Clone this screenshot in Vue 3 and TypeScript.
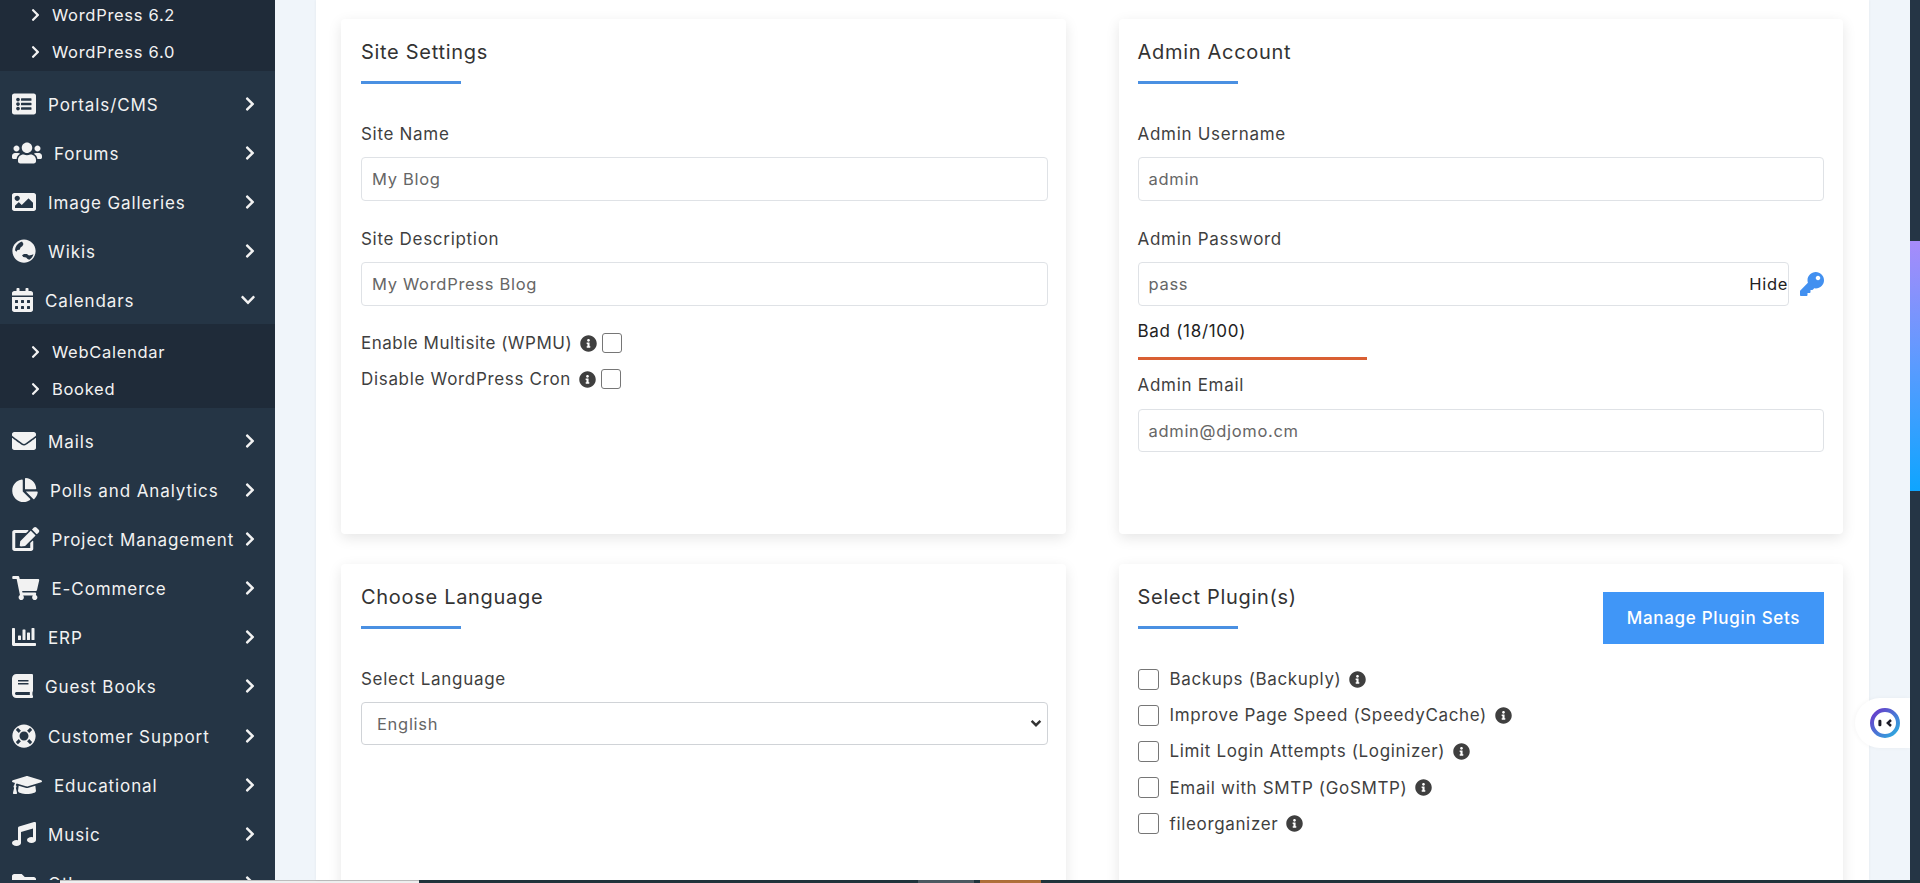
<script setup lang="ts">
interface Icon { box: string; d: string; w: number }
interface Item { label: string; icon: Icon; open?: boolean; subs?: string[] }

const I = {
  list: { box: '0 0 512 512', w: 24, d: 'M464 480H48c-26.51 0-48-21.49-48-48V80c0-26.51 21.49-48 48-48h416c26.51 0 48 21.49 48 48v352c0 26.51-21.49 48-48 48zM128 120c-22.091 0-40 17.909-40 40s17.909 40 40 40 40-17.909 40-40-17.909-40-40-40zm0 96c-22.091 0-40 17.909-40 40s17.909 40 40 40 40-17.909 40-40-17.909-40-40-40zm0 96c-22.091 0-40 17.909-40 40s17.909 40 40 40 40-17.909 40-40-17.909-40-40-40zm288-136v-32c0-6.627-5.373-12-12-12H204c-6.627 0-12 5.373-12 12v32c0 6.627 5.373 12 12 12h200c6.627 0 12-5.373 12-12zm0 96v-32c0-6.627-5.373-12-12-12H204c-6.627 0-12 5.373-12 12v32c0 6.627 5.373 12 12 12h200c6.627 0 12-5.373 12-12zm0 96v-32c0-6.627-5.373-12-12-12H204c-6.627 0-12 5.373-12 12v32c0 6.627 5.373 12 12 12h200c6.627 0 12-5.373 12-12z' },
  users: { box: '0 0 640 512', w: 30, d: 'M96 224c35.3 0 64-28.7 64-64s-28.7-64-64-64-64 28.7-64 64 28.7 64 64 64zm448 0c35.3 0 64-28.7 64-64s-28.7-64-64-64-64 28.7-64 64 28.7 64 64 64zm32 32h-64c-17.6 0-33.5 7.1-45.1 18.6 40.3 22.1 68.9 62 75.1 109.4h66c17.7 0 32-14.3 32-32v-32c0-35.3-28.7-64-64-64zm-256 0c61.9 0 112-50.1 112-112S381.9 32 320 32 208 82.1 208 144s50.1 112 112 112zm76.8 32h-8.3c-20.8 10-43.9 16-68.5 16s-47.6-6-68.5-16h-8.3C179.6 288 128 339.6 128 403.2V432c0 26.5 21.5 48 48 48h288c26.5 0 48-21.5 48-48v-28.8c0-63.6-51.6-115.2-115.2-115.2zm-223.7-13.4C161.5 263.1 145.6 256 128 256H64c-35.3 0-64 28.7-64 64v32c0 17.7 14.3 32 32 32h65.9c6.3-47.4 34.9-87.3 75.2-109.4z' },
  image: { box: '0 0 512 512', w: 24, d: 'M464 448H48c-26.51 0-48-21.49-48-48V112c0-26.51 21.49-48 48-48h416c26.51 0 48 21.49 48 48v288c0 26.51-21.49 48-48 48zM112 120c-30.928 0-56 25.072-56 56s25.072 56 56 56 56-25.072 56-56-25.072-56-56-56zM64 384h384V272l-87.515-87.515c-4.686-4.686-12.284-4.686-16.971 0L208 320l-55.515-55.515c-4.686-4.686-12.284-4.686-16.971 0L64 336v48z' },
  globe: { box: '0 0 496 512', w: 24, d: 'M248 8C111 8 0 119 0 256s111 248 248 248 248-111 248-248S385 8 248 8zm-12 96l-20 46-42 30-20 50-44 6-24 38-30-34c4-74 48-138 110-170 l40-16zm214 220c-14 50-46 90-90 116l-36-14-30-30-62-14-26-36 42-26 62 2 44 28 50-10 46-16z' },
  calendar: { box: '0 0 448 512', w: 21, d: 'M0 464c0 26.5 21.5 48 48 48h352c26.5 0 48-21.5 48-48V192H0v272zm320-196c0-6.6 5.4-12 12-12h40c6.6 0 12 5.4 12 12v40c0 6.6-5.4 12-12 12h-40c-6.6 0-12-5.4-12-12v-40zm0 128c0-6.6 5.4-12 12-12h40c6.6 0 12 5.4 12 12v40c0 6.6-5.4 12-12 12h-40c-6.6 0-12-5.4-12-12v-40zM192 268c0-6.6 5.4-12 12-12h40c6.6 0 12 5.4 12 12v40c0 6.6-5.4 12-12 12h-40c-6.6 0-12-5.4-12-12v-40zm0 128c0-6.6 5.4-12 12-12h40c6.6 0 12 5.4 12 12v40c0 6.6-5.4 12-12 12h-40c-6.6 0-12-5.4-12-12v-40zM64 268c0-6.6 5.4-12 12-12h40c6.6 0 12 5.4 12 12v40c0 6.6-5.4 12-12 12H76c-6.6 0-12-5.4-12-12v-40zm0 128c0-6.6 5.4-12 12-12h40c6.6 0 12 5.4 12 12v40c0 6.6-5.4 12-12 12H76c-6.6 0-12-5.4-12-12v-40zM400 64h-48V16c0-8.8-7.2-16-16-16h-32c-8.8 0-16 7.2-16 16v48H160V16c0-8.8-7.2-16-16-16h-32c-8.8 0-16 7.2-16 16v48H48C21.5 64 0 85.5 0 112v48h448v-48c0-26.5-21.5-48-48-48z' },
  mail: { box: '0 0 512 512', w: 24, d: 'M502.3 190.8c3.9-3.1 9.7-.2 9.7 4.7V400c0 26.5-21.5 48-48 48H48c-26.5 0-48-21.5-48-48V195.6c0-5 5.7-7.8 9.7-4.7 22.4 17.4 52.1 39.5 154.1 113.6 21.1 15.4 56.7 47.8 92.2 47.6 35.7.3 72-32.8 92.3-47.6 102-74.1 131.6-96.3 154-113.7zM256 320c23.2.4 56.6-29.2 73.4-41.4 132.7-96.3 142.8-104.7 173.4-128.7 5.8-4.5 9.2-11.5 9.2-18.9v-19c0-26.5-21.5-48-48-48H48C21.5 64 0 85.5 0 112v19c0 7.4 3.4 14.3 9.2 18.9 30.6 23.9 40.7 32.4 173.4 128.7 16.8 12.2 50.2 41.8 73.4 41.4z' },
  pie: { box: '0 0 544 512', w: 26, d: 'M527.79 288H290.5l158.03 158.03c6.04 6.04 15.98 6.53 22.19.68 38.7-36.46 65.32-85.61 73.13-140.86 1.34-9.46-6.51-17.85-16.06-17.85zm-15.83-64.8C503.72 103.74 408.26 8.28 288.8.04 279.68-.59 272 7.1 272 16.24V240h223.77c9.14 0 16.82-7.68 16.19-16.8zM224 288V50.71c0-9.55-8.39-17.4-17.84-16.06C86.99 51.49-4.1 155.6.14 280.37 4.5 408.51 114.83 513.59 243.03 511.98c50.4-.63 96.97-16.87 135.26-44.03 7.9-5.6 8.42-17.23 1.57-24.08L224 288z' },
  edit: { box: '0 0 576 512', w: 27.5, d: 'M402.6 83.2l90.2 90.2c3.8 3.8 3.8 10 0 13.8L274.4 405.6l-92.8 10.3c-12.4 1.4-22.9-9.1-21.5-21.5l10.3-92.8L388.8 83.2c3.8-3.8 10-3.8 13.8 0zm162-22.9l-48.8-48.8c-15.2-15.2-39.9-15.2-55.2 0l-35.4 35.4c-3.8 3.8-3.8 10 0 13.8l90.2 90.2c3.8 3.8 10 3.8 13.8 0l35.4-35.4c15.2-15.3 15.2-40 0-55.2zM384 346.2V448H64V128h229.8c3.2 0 6.2-1.3 8.5-3.5l40-40c7.6-7.6 2.2-20.5-8.5-20.5H48C21.5 64 0 85.5 0 112v352c0 26.5 21.5 48 48 48h352c26.5 0 48-21.5 48-48V306.2c0-10.7-12.9-16-20.5-8.5l-40 40c-2.2 2.3-3.5 5.3-3.5 8.5z' },
  cart: { box: '0 0 576 512', w: 27.5, d: 'M528.12 301.319l47.273-208C578.806 78.301 567.391 64 551.99 64H159.208l-9.166-44.81C147.758 8.021 137.93 0 126.529 0H24C10.745 0 0 10.745 0 24v16c0 13.255 10.745 24 24 24h69.883l70.248 343.435C147.325 417.1 136 435.222 136 456c0 30.928 25.072 56 56 56s56-25.072 56-56c0-15.674-6.447-29.835-16.824-40h209.647C430.447 426.165 424 440.326 424 456c0 30.928 25.072 56 56 56s56-25.072 56-56c0-22.172-12.888-41.332-31.579-50.405l5.517-24.276c3.413-15.018-8.002-29.319-23.403-29.319H218.117l-6.545-32h293.145c11.206 0 20.92-7.754 23.403-18.681z' },
  chart: { box: '0 0 512 512', w: 24, d: 'M332.8 320h38.4c6.4 0 12.8-6.4 12.8-12.8V172.8c0-6.4-6.4-12.8-12.8-12.8h-38.4c-6.4 0-12.8 6.4-12.8 12.8v134.4c0 6.4 6.4 12.8 12.8 12.8zm96 0h38.4c6.4 0 12.8-6.4 12.8-12.8V76.8c0-6.4-6.4-12.8-12.8-12.8h-38.4c-6.4 0-12.8 6.4-12.8 12.8v230.4c0 6.4 6.4 12.8 12.8 12.8zm-288 0h38.4c6.4 0 12.8-6.4 12.8-12.8v-70.4c0-6.4-6.4-12.8-12.8-12.8h-38.4c-6.4 0-12.8 6.4-12.8 12.8v70.4c0 6.4 6.4 12.8 12.8 12.8zm96 0h38.4c6.4 0 12.8-6.4 12.8-12.8V108.8c0-6.4-6.4-12.8-12.8-12.8h-38.4c-6.4 0-12.8 6.4-12.8 12.8v198.4c0 6.4 6.4 12.8 12.8 12.8zM496 384H64V80c0-8.84-7.16-16-16-16H16C7.16 64 0 71.16 0 80v336c0 17.67 14.33 32 32 32h464c8.84 0 16-7.16 16-16v-32c0-8.84-7.16-16-16-16z' },
  book: { box: '0 0 448 512', w: 21, d: 'M448 360V24c0-13.3-10.7-24-24-24H96C43 0 0 43 0 96v320c0 53 43 96 96 96h328c13.3 0 24-10.7 24-24v-16c0-7.5-3.5-14.3-8.9-18.7-4.2-15.4-4.2-59.3 0-74.7 5.4-4.3 8.9-11.1 8.9-18.6zM128 134c0-3.3 2.7-6 6-6h212c3.3 0 6 2.7 6 6v20c0 3.3-2.7 6-6 6H134c-3.3 0-6-2.7-6-6v-20zm0 64c0-3.3 2.7-6 6-6h212c3.3 0 6 2.7 6 6v20c0 3.3-2.7 6-6 6H134c-3.3 0-6-2.7-6-6v-20zm253.4 250H96c-17.7 0-32-14.3-32-32 0-17.6 14.4-32 32-32h285.4c-1.9 17.1-1.9 46.9 0 64z' },
  ring: { box: '0 0 512 512', w: 24, d: 'M256 8C119.033 8 8 119.033 8 256s111.033 248 248 248 248-111.033 248-248S392.967 8 256 8zm173.696 119.559l-63.399 63.399c-10.987-18.559-26.67-34.252-45.255-45.255l63.399-63.399a218.396 218.396 0 0 1 45.255 45.255zM256 352c-53.019 0-96-42.981-96-96s42.981-96 96-96 96 42.981 96 96-42.981 96-96 96zM127.559 82.304l63.399 63.399c-18.559 10.987-34.252 26.67-45.255 45.255l-63.399-63.399a218.372 218.372 0 0 1 45.255-45.255zM82.304 384.441l63.399-63.399c10.987 18.559 26.67 34.252 45.255 45.255l-63.399 63.399a218.396 218.396 0 0 1-45.255-45.255zm302.137 45.255l-63.399-63.399c18.559-10.987 34.252-26.67 45.255-45.255l63.399 63.399a218.403 218.403 0 0 1-45.255 45.255z' },
  cap: { box: '0 0 640 512', w: 30, d: 'M622.34 153.2L343.4 67.5c-15.2-4.67-31.6-4.67-46.79 0L17.66 153.2c-23.54 7.23-23.54 38.36 0 45.59l48.63 14.94c-10.67 13.19-17.23 29.28-17.88 46.9C38.78 266.15 32 276.11 32 288c0 10.78 5.68 19.85 13.86 25.65L20.33 428.53C18.11 438.52 25.71 448 35.94 448h56.11c10.24 0 17.84-9.48 15.62-19.47L82.14 313.65C90.32 307.85 96 298.78 96 288c0-11.57-6.47-21.25-15.66-26.87.76-15.02 8.44-28.3 20.69-36.72L296.6 284.5c9.06 2.78 26.44 6.25 46.79 0l278.95-85.7c23.55-7.24 23.55-38.36 0-45.6zM352.79 315.09c-28.53 8.76-52.84 3.92-65.59 0l-145.02-44.55L128 384c0 35.35 85.96 64 192 64s192-28.65 192-64l-14.18-113.47-145.03 44.56z' },
  music: { box: '0 0 512 512', w: 24, d: 'M470.38 1.51L150.41 96A32 32 0 0 0 128 126.51v261.41A139 139 0 0 0 96 384c-53 0-96 28.66-96 64s43 64 96 64 96-28.66 96-64V214.32l256-75v184.61a138.4 138.4 0 0 0-32-3.93c-53 0-96 28.66-96 64s43 64 96 64 96-28.65 96-64V32a32 32 0 0 0-41.62-30.49z' },
  folder: { box: '0 0 512 512', w: 24, d: 'M464 128H272l-64-64H48C21.49 64 0 85.49 0 112v288c0 26.51 21.49 48 48 48h416c26.51 0 48-21.49 48-48V176c0-26.51-21.49-48-48-48z' },
} satisfies Record<string, Icon>

const CHEV_R = 'M285.476 272.971L91.132 467.314c-9.373 9.373-24.569 9.373-33.941 0l-22.667-22.667c-9.357-9.357-9.375-24.522-.04-33.901L188.505 256 34.484 101.255c-9.335-9.379-9.317-24.544.04-33.901l22.667-22.667c9.373-9.373 24.569-9.373 33.941 0L285.475 239.03c9.373 9.372 9.373 24.568.001 33.941z'
const CHEV_D = 'M207.029 381.476L12.686 187.132c-9.373-9.373-9.373-24.569 0-33.941l22.667-22.667c9.357-9.357 24.522-9.375 33.901-.04L224 284.505l154.745-154.021c9.379-9.335 24.544-9.317 33.901.04l22.667 22.667c9.373 9.373 9.373 24.569 0 33.941L240.971 381.476c-9.373 9.372-24.569 9.372-33.942 0z'
const INFO = 'M256 8C119.043 8 8 119.083 8 256c0 136.997 111.043 248 248 248s248-111.003 248-248C504 119.083 392.957 8 256 8zm0 110c23.196 0 42 18.804 42 42s-18.804 42-42 42-42-18.804-42-42 18.804-42 42-42zm56 254c0 6.627-5.373 12-12 12h-88c-6.627 0-12-5.373-12-12v-24c0-6.627 5.373-12 12-12h12v-64h-12c-6.627 0-12-5.373-12-12v-24c0-6.627 5.373-12 12-12h64c6.627 0 12 5.373 12 12v100h12c6.627 0 12 5.373 12 12v24z'
const KEY = 'M512 176.001C512 273.203 433.202 352 336 352c-11.22 0-22.19-1.062-32.827-3.069l-24.012 27.014A23.999 23.999 0 0 1 261.223 384H224v40c0 13.255-10.745 24-24 24h-40v40c0 13.255-10.745 24-24 24H24c-13.255 0-24-10.745-24-24v-78.059c0-6.365 2.529-12.47 7.029-16.971l161.802-161.802C163.108 213.814 160 195.271 160 176 160 78.798 238.797.001 335.999 0 433.488-.001 512 78.511 512 176.001zM336 128c0 26.51 21.49 48 48 48s48-21.49 48-48-21.49-48-48-48-48 21.49-48 48z'

const topSubs = ['WordPress 6.2', 'WordPress 6.0']
const items: Item[] = [
  { label: 'Portals/CMS', icon: I.list },
  { label: 'Forums', icon: I.users },
  { label: 'Image Galleries', icon: I.image },
  { label: 'Wikis', icon: I.globe },
  { label: 'Calendars', icon: I.calendar, open: true, subs: ['WebCalendar', 'Booked'] },
  { label: 'Mails', icon: I.mail },
  { label: 'Polls and Analytics', icon: I.pie },
  { label: 'Project Management', icon: I.edit },
  { label: 'E-Commerce', icon: I.cart },
  { label: 'ERP', icon: I.chart },
  { label: 'Guest Books', icon: I.book },
  { label: 'Customer Support', icon: I.ring },
  { label: 'Educational', icon: I.cap },
  { label: 'Music', icon: I.music },
  { label: 'Others', icon: I.folder },
]
const plugins = [
  'Backups (Backuply)',
  'Improve Page Speed (SpeedyCache)',
  'Limit Login Attempts (Loginizer)',
  'Email with SMTP (GoSMTP)',
  'fileorganizer',
]
</script>

<template>
  <div class="page">
    <div class="shell">
      <aside class="sidebar">
        <ul class="subs subs-top">
          <li v-for="s in topSubs" :key="s" class="sub">
            <svg class="sub-chev" viewBox="0 0 320 512"><path :d="CHEV_R" /></svg>{{ s }}
          </li>
        </ul>
        <template v-for="it in items" :key="it.label">
          <div class="item">
            <svg class="ico" :viewBox="it.icon.box" :style="{ width: it.icon.w + 'px' }"><path :d="it.icon.d" /></svg>
            <span class="item-label">{{ it.label }}</span>
            <svg v-if="it.open" class="chev-d" viewBox="0 0 448 512"><path :d="CHEV_D" /></svg>
            <svg v-else class="chev-r" viewBox="0 0 320 512"><path :d="CHEV_R" /></svg>
          </div>
          <ul v-if="it.subs" class="subs">
            <li v-for="s in it.subs" :key="s" class="sub">
              <svg class="sub-chev" viewBox="0 0 320 512"><path :d="CHEV_R" /></svg>{{ s }}
            </li>
          </ul>
        </template>
      </aside>

      <main class="main">
        <div class="panel">
          <div class="grid">
            <section class="card card-top">
              <h2 class="title">Site Settings</h2>
              <label class="label">Site Name</label>
              <div class="input">My Blog</div>
              <label class="label">Site Description</label>
              <div class="input">My WordPress Blog</div>
              <div class="check-row first">
                <span>Enable Multisite (WPMU)</span>
                <svg class="info" viewBox="0 0 512 512"><path :d="INFO" /></svg>
                <span class="box"></span>
              </div>
              <div class="check-row second">
                <span>Disable WordPress Cron</span>
                <svg class="info" viewBox="0 0 512 512"><path :d="INFO" /></svg>
                <span class="box"></span>
              </div>
            </section>

            <section class="card card-top">
              <h2 class="title">Admin Account</h2>
              <label class="label">Admin Username</label>
              <div class="input">admin</div>
              <label class="label">Admin Password</label>
              <div class="pass-row">
                <div class="input pass">pass<span class="hide">Hide</span></div>
                <svg class="key" viewBox="0 0 512 512"><path :d="KEY" /></svg>
              </div>
              <div class="strength">Bad (18/100)</div>
              <div class="meter"></div>
              <label class="label email">Admin Email</label>
              <div class="input email-input">admin@djomo.cm</div>
            </section>

            <section class="card">
              <h2 class="title">Choose Language</h2>
              <label class="label">Select Language</label>
              <div class="input select">
                English
                <svg class="sel-chev" viewBox="0 0 16 16"><path d="M3 5.5l5 5 5-5" /></svg>
              </div>
            </section>

            <section class="card">
              <div class="plug-head">
                <h2 class="title">Select Plugin(s)</h2>
                <button class="btn" type="button">Manage Plugin Sets</button>
              </div>
              <div v-for="p in plugins" :key="p" class="plugin">
                <span class="box"></span>
                <span class="plugin-label">{{ p }}</span>
                <svg class="info" viewBox="0 0 512 512"><path :d="INFO" /></svg>
              </div>
            </section>
          </div>
        </div>
        <div class="bot">
          <svg viewBox="0 0 40 40" class="bot-ico">
            <defs>
              <linearGradient id="botg" x1="0" y1="0" x2="1" y2="1">
                <stop offset="0" stop-color="#6b35c9" />
                <stop offset="1" stop-color="#2bb0e0" />
              </linearGradient>
            </defs>
            <circle cx="20" cy="20" r="13" fill="#fff" stroke="url(#botg)" stroke-width="4" />
            <rect x="13.4" y="16.8" width="3" height="6.4" rx="1.3" fill="#1c1c28" />
            <path d="M26 17l-3.2 3 3.2 3" fill="none" stroke="#1c1c28" stroke-width="2.4" />
          </svg>
        </div>
      </main>

      <div class="scroll"><div class="thumb"></div></div>
    </div>
    <div class="strip">
      <div class="strip-side"></div>
      <div class="strip-light"></div>
      <div class="strip-dark">
        <span class="seg seg-gray"></span>
        <span class="seg seg-orange"></span>
      </div>
    </div>
  </div>
</template>

<style>
html, body { margin: 0; height: 100%; overflow: hidden; background: #f0f5fa; }
</style>

<style scoped>
* { box-sizing: border-box; }
.page {
  width: 1920px; height: 883px; overflow: hidden;
  display: flex; flex-direction: column;
  font-family: Inter, "Liberation Sans", sans-serif;
  color: #3b3b3b;
}
.shell { flex: 1; min-height: 0; display: flex; }
.sidebar {
  width: 275px; flex: none; background: #253545; color: #f2f2f2;
  overflow: hidden; font-size: 17px; letter-spacing: .9px;
}
.subs { list-style: none; margin: 0 0 8px; padding: 9px 0 1px; background: #1f2b39; }
.subs-top { margin-top: -13px; }
.sub { height: 37px; display: flex; align-items: center; padding-left: 31px; font-size: 16.5px; letter-spacing: .7px; }
.sub-chev { width: 9px; height: 14px; fill: #f2f2f2; margin-right: 12px; flex: none; }
.item { height: 49.1px; display: flex; align-items: center; padding: 0 20px 0 12px; }
.ico { height: 24px; flex: none; fill: #f2f2f2; margin-right: 12px; }
.item-label { flex: 1; white-space: nowrap; padding-top: 2px; }
.chev-r { width: 10px; height: 16px; fill: #f2f2f2; flex: none; }
.chev-d { width: 14px; height: 16px; fill: #f2f2f2; flex: none; }

.main { flex: 1; min-width: 0; position: relative; padding: 0 41px; background: #f0f5fa; }
.panel { background: #fff; height: 100%; padding: 19px 26px 0 25px; overflow: hidden; box-shadow: 0 0 3px rgba(0,0,0,.06); }
.grid { display: grid; grid-template-columns: 725px 724px; column-gap: 53px; row-gap: 30px; grid-auto-rows: min-content; }
.card {
  background: #fff; border-radius: 4px; padding: 0 18px 0 20px;
  box-shadow: 0 4px 14px rgba(0,0,0,.1);
  min-height: 420px;
}
.card:nth-child(even) { padding-left: 18.5px; padding-right: 19px; }
.card-top { height: 515px; }
.title {
  margin: 0; padding-top: 20px; font-size: 20px; font-weight: 400; line-height: 26px; color: #333;
  position: relative; height: 65px; letter-spacing: .7px;
}
.title::after { content: ""; position: absolute; left: 0; bottom: 0; width: 100px; height: 3px; background: #4a90e2; }
.label { display: block; margin: 38px 0 0; font-size: 17px; line-height: 24px; letter-spacing: .7px; color: #3f3f3f; }
.input + .label { margin-top: 26px; }
.input {
  height: 44px; margin-top: 11px; border: 1px solid #dfe2e6; border-radius: 4px;
  padding: 0 10px; display: flex; align-items: center;
  font-size: 16.5px; letter-spacing: .7px; color: #666; background: #fff;
}
.check-row { display: flex; align-items: center; height: 36px; font-size: 17px; color: #3f3f3f; }
.check-row.first { margin-top: 19px; letter-spacing: .5px; }
.check-row.second { letter-spacing: .68px; }
.info { width: 17px; height: 17px; fill: #3f3f3f; margin-left: 8px; flex: none; }
.box { width: 20px; height: 20px; border: 1px solid #767676; border-radius: 3px; background: #fff; flex: none; margin-left: 5px; }
.pass-row { display: flex; align-items: center; }
.pass { flex: 1; position: relative; }
.hide { position: absolute; right: 0; top: 50%; transform: translateY(-50%); color: #222; }
.key { width: 24px; height: 24px; fill: #4290f0; margin: 11px 0 0 11px; flex: none; }
.strength { margin-top: 13px; font-size: 17px; line-height: 24px; letter-spacing: .7px; color: #222; }
.meter { width: 229px; height: 3px; margin-top: 14px; background: #d95f33; }
.label.email { margin-top: 13px; }
.email-input { margin-top: 12px; height: 43px; }
.plug-head { display: flex; justify-content: space-between; align-items: flex-start; }
.plug-head .title { width: 100px; white-space: nowrap; }
.btn {
  width: 221px; height: 52px; margin-top: 28px; border: 0; background: #4096f7; color: #fff;
  font: inherit; font-size: 17px; font-weight: 500; letter-spacing: .7px;
}
.plug-head + .plugin { margin-top: 17px; }
.plugin { display: flex; align-items: center; height: 36.2px; font-size: 17px; letter-spacing: .65px; color: #3f3f3f; }
.plugin .box { margin-left: 0; margin-right: 11px; width: 21px; height: 21px; }
.select { padding-left: 15px; position: relative; border-color: #d0d3d7; height: 43px; }
.sel-chev { position: absolute; right: 4px; top: 13px; width: 14px; height: 14px; fill: none; stroke: #333; stroke-width: 2.8; }

.bot {
  position: absolute; right: 0; top: 698px; width: 55px; height: 50px; padding-left: 9.5px;
  background: #fff; border-radius: 25px 0 0 25px; display: flex; align-items: center;
  box-shadow: -1px 0 4px rgba(0,0,0,.04);
}
.bot-ico { width: 40px; height: 40px; flex: none; }
.scroll { width: 10px; flex: none; background: #253545; padding-top: 241px; }
.thumb { height: 250px; background: linear-gradient(#a78bfa, #5a9bff 50%, #0ea5ff); }
.strip { height: 3px; flex: none; display: flex; }
.strip-side { width: 60px; background: #253545; }
.strip-light { width: 359px; background: #efefef; border-top: 1px solid #bdbdbd; }
.strip-dark { flex: 1; background: #20343c; display: flex; padding-left: 499px; gap: 6px; }
.seg { height: 3px; display: block; }
.seg-gray { width: 56px; background: #4d5a62; }
.seg-orange { width: 61px; background: #b0703a; }
</style>
